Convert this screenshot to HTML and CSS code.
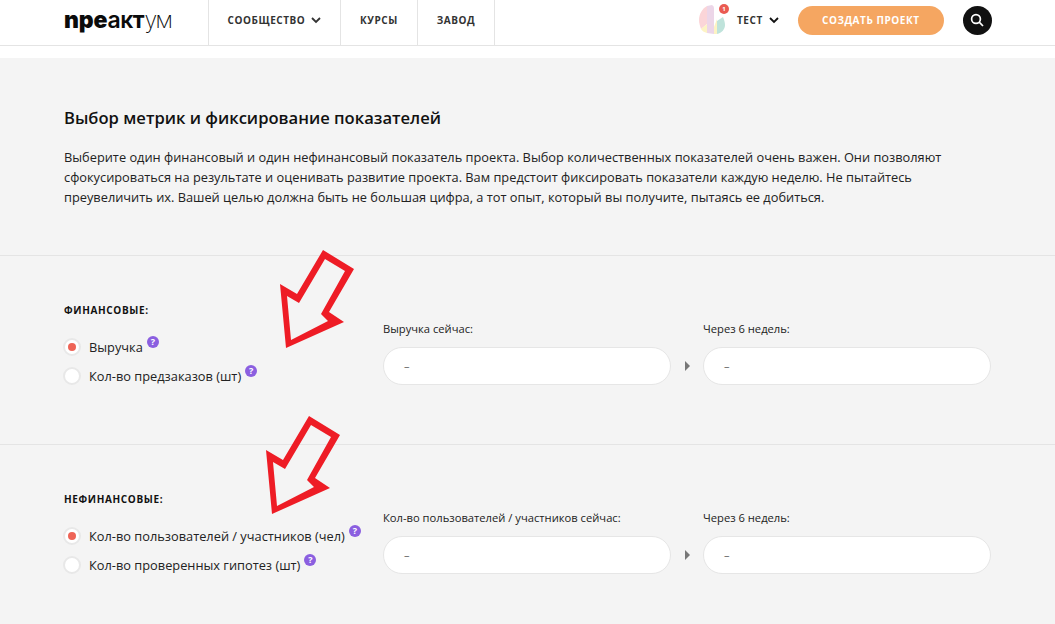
FILE: index.html
```html
<!DOCTYPE html>
<html lang="ru">
<head>
    <meta charset="UTF-8">
    <meta name="viewport" content="width=device-width, initial-scale=1.0">
    <title>Преактум</title>
    <link rel="stylesheet" href="styles.css">
</head>
<body>

<header class="topbar">
    <a class="logo" href="#"><span class="logo-heavy">npe</span><span class="logo-mid">aк</span><span class="logo-heavy-t">т</span><span class="logo-thin">ум</span></a>
    <nav class="nav">
        <a class="nav-item nav-community" href="#">Сообщество
            <svg class="chevron" viewBox="0 0 10 7"><path d="M1 1l4 4 4-4" /></svg>
        </a>
        <a class="nav-item nav-courses" href="#">Курсы</a>
        <a class="nav-item nav-plant" href="#">Завод</a>
    </nav>
    <div class="user">
        <div class="avatar">
            <svg viewBox="0 0 26 30" width="26" height="30">
                <path d="M0 15C0 9 3 4 8 1V19L2 24C1 21 0 18 0 15z" fill="#fbd5d8" />
                <path d="M2 24L8 19V28C5 27 3 26 2 24z" fill="#fdf3c4" />
                <path d="M8 1L13 0Q15 1 15 3V29L8 28z" fill="#ecd6e8" />
                <path d="M15 22L18 14V29H15z" fill="#fdf3c4" />
                <path d="M18 16L24 12C25 15 26 17 26 20C26 24 23 28 18 29z" fill="#bfe3db" />
            </svg>
            <span class="avatar-badge">1</span>
        </div>
        <a class="user-name" href="#">Тест
            <svg class="chevron chevron-dark" viewBox="0 0 10 7"><path d="M1 1l4 4 4-4" /></svg>
        </a>
    </div>
    <a class="create-btn" href="#">Создать проект</a>
    <button class="search-btn" type="button">
        <svg viewBox="0 0 14 14" width="14" height="14"><circle cx="6" cy="6" r="4.4" /><path d="M9.2 9.2l3.8 3.8" /></svg>
    </button>
</header>

<main class="page">
    <!-- Intro -->
    <section class="intro">
        <h1>Выбор метрик и фиксирование показателей</h1>
        <p>Выберите один финансовый и один нефинансовый показатель проекта. Выбор количественных показателей очень важен. Они позволяют сфокусироваться на результате и оценивать развитие проекта. Вам предстоит фиксировать показатели каждую неделю. Не пытайтесь преувеличить их. Вашей целью должна быть не большая цифра, а тот опыт, который вы получите, пытаясь ее добиться.</p>
    </section>

    <!-- Financial -->
    <section class="metric">
        <div class="metric-choice">
            <h2>Финансовые:</h2>
            <div class="radio-row">
                <span class="radio radio-on"></span>
                <span class="radio-label">Выручка</span>
                <span class="hint">?</span>
            </div>
            <div class="radio-row">
                <span class="radio"></span>
                <span class="radio-label">Кол-во предзаказов (шт)</span>
                <span class="hint">?</span>
            </div>
        </div>
        <div class="metric-fields">
            <div class="field">
                <label>Выручка сейчас:</label>
                <div class="field-input">–</div>
            </div>
            <span class="field-arrow"></span>
            <div class="field">
                <label>Через 6 недель:</label>
                <div class="field-input">–</div>
            </div>
        </div>
        <svg class="red-arrow red-arrow-one" viewBox="0 0 80 104" width="80" height="104">
            <path fill-rule="evenodd" d="M45 1L76 20 51 63 66 73 8 99 2 35 19 45zM47 10L67 22 43 65 50 72 13 91 9 47 21 54z" />
        </svg>
    </section>

    <!-- Non financial -->
    <section class="metric">
        <div class="metric-choice">
            <h2>Нефинансовые:</h2>
            <div class="radio-row">
                <span class="radio radio-on"></span>
                <span class="radio-label">Кол-во пользователей / участников (чел)</span>
                <span class="hint">?</span>
            </div>
            <div class="radio-row">
                <span class="radio"></span>
                <span class="radio-label">Кол-во проверенных гипотез (шт)</span>
                <span class="hint">?</span>
            </div>
        </div>
        <div class="metric-fields">
            <div class="field">
                <label>Кол-во пользователей / участников сейчас:</label>
                <div class="field-input">–</div>
            </div>
            <span class="field-arrow"></span>
            <div class="field">
                <label>Через 6 недель:</label>
                <div class="field-input">–</div>
            </div>
        </div>
        <svg class="red-arrow red-arrow-two" viewBox="0 0 80 104" width="80" height="104">
            <path fill-rule="evenodd" d="M45 1L76 20 51 63 66 73 8 99 2 35 19 45zM47 10L67 22 43 65 50 72 13 91 9 47 21 54z" />
        </svg>
    </section>
</main>

</body>
</html>
```

FILE: styles.css
```css
html, body {
    height: 624px;
    overflow: hidden;
}
body {
    font-family: "Open Sans", Arial, sans-serif;
    background-color: #fff;
    color: #111;
    margin: 0;
    padding: 0;
}
a {
    color: inherit;
    text-decoration: none;
}

/* header */
.topbar {
    display: flex;
    align-items: center;
    height: 40px;
    padding: 0 0 5px 64px;
    border-bottom: 1px solid #e4e4e4;
}
.logo {
    display: flex;
    align-items: baseline;
    width: 144px;
    font-family: Inter, sans-serif;
    font-size: 23px;
    line-height: 40px;
    color: #0b0b0b;
}
.logo-heavy {
    font-weight: 900;
    letter-spacing: -0.1px;
}
.logo-mid {
    font-weight: 600;
    letter-spacing: -0.5px;
}
.logo-heavy-t {
    font-weight: 700;
}
.logo-thin {
    font-weight: 200;
    letter-spacing: -1.6px;
}
.nav {
    display: flex;
    align-self: flex-start;
    height: 45px;
    border-right: 1px solid #e4e4e4;
}
.nav-item {
    display: flex;
    align-items: center;
    justify-content: center;
    gap: 6px;
    box-sizing: border-box;
    padding-bottom: 5px;
    border-left: 1px solid #e4e4e4;
    font-size: 10px;
    font-weight: 700;
    letter-spacing: 0.55px;
    text-transform: uppercase;
    color: #333;
}
.nav-community {
    width: 132px;
}
.nav-courses {
    width: 77px;
}
.nav-plant {
    width: 77px;
}
.chevron {
    width: 10px;
    height: 7px;
    fill: none;
    stroke: #333;
    stroke-width: 1.8;
}
.chevron-dark {
    stroke: #111;
}
.user {
    display: flex;
    align-items: center;
    margin-left: 204px;
}
.avatar {
    position: relative;
    width: 26px;
    height: 30px;
    margin-right: 12px;
}
.avatar-badge {
    position: absolute;
    top: -1px;
    left: 20px;
    width: 10px;
    height: 10px;
    border-radius: 50%;
    background-color: #ea5b52;
    color: #fff;
    font-size: 6px;
    font-weight: 700;
    line-height: 10px;
    text-align: center;
}
.user-name {
    display: flex;
    align-items: center;
    gap: 6px;
    font-size: 10px;
    font-weight: 700;
    letter-spacing: 0.55px;
    text-transform: uppercase;
    color: #333;
}
.create-btn {
    width: 146px;
    height: 29px;
    margin-left: 19px;
    border-radius: 15px;
    background-color: #f5a661;
    color: #fff;
    font-size: 10px;
    font-weight: 700;
    letter-spacing: 0.55px;
    line-height: 28px;
    text-align: center;
    text-transform: uppercase;
}
.search-btn {
    display: flex;
    align-items: center;
    justify-content: center;
    width: 29px;
    height: 29px;
    margin-left: 19px;
    padding: 0;
    border: none;
    border-radius: 50%;
    background-color: #111;
}
.search-btn svg {
    fill: none;
    stroke: #fff;
    stroke-width: 1.7;
}

/* content */
.page {
    margin-top: 12px;
    background-color: #f4f4f4;
    height: 566px;
}
.intro {
    height: 197px;
    padding: 49px 64px 0;
    box-sizing: border-box;
}
.intro h1 {
    margin: 0 0 18px;
    font-size: 16.6px;
    font-weight: 600;
    line-height: 22px;
    color: #111;
}
.intro p {
    margin: 0;
    width: 900px;
    font-size: 12.8px;
    line-height: 20px;
    color: #222;
}
.metric {
    position: relative;
    display: flex;
    height: 189px;
    box-sizing: border-box;
    padding: 0 64px;
    border-top: 1px solid #e4e4e4;
}
.metric-choice {
    width: 319px;
    padding-top: 47px;
}
.metric-choice h2 {
    margin: 0 0 15px;
    font-size: 10px;
    font-weight: 700;
    line-height: 14px;
    letter-spacing: 0.65px;
    text-transform: uppercase;
    color: #111;
}
.radio-row {
    display: flex;
    align-items: center;
    height: 29px;
    font-size: 12.8px;
    color: #222;
}
.radio {
    flex: none;
    position: relative;
    box-sizing: border-box;
    width: 18px;
    height: 18px;
    margin-left: -1px;
    margin-right: 8px;
    border: 2px solid #e8e8e8;
    border-radius: 50%;
    background-color: #fff;
}
.radio-on::after {
    content: "";
    position: absolute;
    top: 3px;
    left: 3px;
    width: 8px;
    height: 8px;
    border-radius: 50%;
    background-color: #ee6457;
}
.hint {
    flex: none;
    width: 12px;
    height: 12px;
    margin: -9px 0 0 4px;
    border-radius: 50%;
    background-color: #8b5fe0;
    color: #fff;
    font-size: 9px;
    font-weight: 700;
    line-height: 12px;
    text-align: center;
}
.metric-fields {
    display: flex;
    align-items: flex-end;
    align-self: flex-start;
    padding-top: 65px;
}
.field {
    width: 288px;
}
.field label {
    display: block;
    margin-bottom: 10px;
    font-size: 11.2px;
    line-height: 16px;
    color: #222;
}
.field-input {
    box-sizing: border-box;
    height: 38px;
    padding-left: 20px;
    border: 1px solid #e6e6e6;
    border-radius: 19px;
    background-color: #fff;
    font-size: 11px;
    line-height: 36px;
    color: #666;
}
.field-arrow {
    width: 0;
    height: 0;
    margin: 0 13px 14px 14px;
    border-left: 5px solid #777;
    border-top: 5px solid transparent;
    border-bottom: 5px solid transparent;
}
.red-arrow {
    position: absolute;
    fill: #ee1c25;
}
.red-arrow-one {
    left: 278px;
    top: -7px;
}
.red-arrow-two {
    left: 264px;
    top: -30px;
}
```
